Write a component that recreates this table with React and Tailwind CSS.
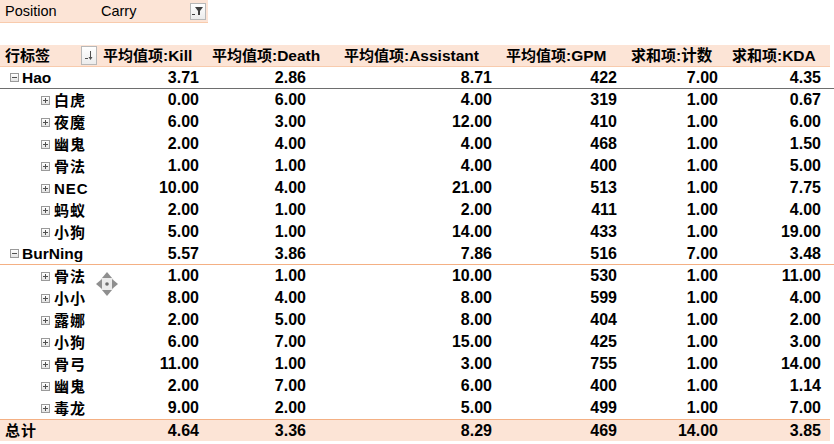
import React from "react";

const rows = [
  { label: "Hao", level: 0, v: ["3.71", "2.86", "8.71", "422", "7.00", "4.35"], line: "dark" },
  { label: "白虎", level: 1, v: ["0.00", "6.00", "4.00", "319", "1.00", "0.67"] },
  { label: "夜魔", level: 1, v: ["6.00", "3.00", "12.00", "410", "1.00", "6.00"] },
  { label: "幽鬼", level: 1, v: ["2.00", "4.00", "4.00", "468", "1.00", "1.50"] },
  { label: "骨法", level: 1, v: ["1.00", "1.00", "4.00", "400", "1.00", "5.00"] },
  { label: "NEC", level: 1, v: ["10.00", "4.00", "21.00", "513", "1.00", "7.75"] },
  { label: "蚂蚁", level: 1, v: ["2.00", "1.00", "2.00", "411", "1.00", "4.00"] },
  { label: "小狗", level: 1, v: ["5.00", "1.00", "14.00", "433", "1.00", "19.00"] },
  { label: "BurNing", level: 0, v: ["5.57", "3.86", "7.86", "516", "7.00", "3.48"], line: "tan" },
  { label: "骨法", level: 1, v: ["1.00", "1.00", "10.00", "530", "1.00", "11.00"] },
  { label: "小小", level: 1, v: ["8.00", "4.00", "8.00", "599", "1.00", "4.00"] },
  { label: "露娜", level: 1, v: ["2.00", "5.00", "8.00", "404", "1.00", "2.00"] },
  { label: "小狗", level: 1, v: ["6.00", "7.00", "15.00", "425", "1.00", "3.00"] },
  { label: "骨弓", level: 1, v: ["11.00", "1.00", "3.00", "755", "1.00", "14.00"] },
  { label: "幽鬼", level: 1, v: ["2.00", "7.00", "6.00", "400", "1.00", "1.14"] },
  { label: "毒龙", level: 1, v: ["9.00", "2.00", "5.00", "499", "1.00", "7.00"] },
];

const total = ["4.64", "3.36", "8.29", "469", "14.00", "3.85"];

// right padding per value column, matches where the numbers end
const valPad = ["pr-[10px]", "pr-[35px]", "pr-[11px]", "pr-[11px]", "pr-[11px]", "pr-[9px]"];

const headers = [
  ["平均值项", ":Kill"],
  ["平均值项", ":Death"],
  ["平均值项", ":Assistant"],
  ["平均值项", ":GPM"],
  ["求和项", ":计数"],
  ["求和项", ":KDA"],
];

const gridCols = "grid grid-cols-[100px_109px_132px_162px_125px_101px_101px_1fr]";

const ExpandBox = ({ open }) => (
  <span className="w-[9px] h-[9px] border border-[#9a9a9a] bg-gradient-to-b from-white to-[#e4e4e4] flex items-center justify-center shrink-0">
    <svg width="7" height="7" viewBox="0 0 7 7">
      <rect x="1" y="3" width="5" height="1" fill="#505050" />
      {!open && <rect x="3" y="1" width="1" height="5" fill="#505050" />}
    </svg>
  </span>
);

const MoveCursor = () => (
  <svg width="22" height="24" viewBox="0 0 22 24" className="absolute left-[96px] top-[272px]">
    <circle cx="11" cy="12" r="8" fill="#ebebeb" />
    <path d="M11 0 L16 6 L6 6 Z" fill="#8f8f8f" />
    <path d="M11 24 L16 18 L6 18 Z" fill="#8f8f8f" />
    <path d="M0 12 L6 7 L6 17 Z" fill="#8f8f8f" />
    <path d="M22 12 L16 7 L16 17 Z" fill="#8f8f8f" />
    <circle cx="11" cy="12" r="1.8" fill="#6c6c6c" />
  </svg>
);

export default function App() {
  return (
    <div className="relative w-[834px] h-[444px] bg-white overflow-hidden text-black font-['Liberation_Sans','Noto_Sans_CJK_SC',sans-serif] text-[15px] leading-none">
      {/* report filter */}
      <div className="flex w-[208px] h-[23px] bg-[#fce4d6] border-b border-[#f8cbad] items-center text-[14.5px]">
        <div className="w-[98px] pl-[5px]">Position</div>
        <div className="flex-1 pl-[3px]">Carry</div>
        <div className="mr-[2px] w-[16px] h-[17px] border border-[#b8b8b8] bg-gradient-to-b from-white to-[#ececec] flex items-center justify-center">
          <svg width="12" height="11" viewBox="0 0 12 11">
            <path d="M3 1 H11 L8 5 V9 H6 V5 Z" fill="#404040" />
            <rect x="0" y="8" width="3" height="1" fill="#404040" />
          </svg>
        </div>
      </div>

      <div className="h-[22px]" />

      {/* header */}
      <div className={`${gridCols} h-[22px] font-bold`}>
        <div className="bg-[#fce4d6] border-b border-[#f8cbad] flex items-center pl-[5px]">
          <span>行标签</span>
          <span className="ml-auto mr-[3px] w-[16px] h-[19px] border border-[#b8b8b8] bg-gradient-to-b from-white to-[#ececec] flex items-center justify-center">
            <svg width="10" height="11" viewBox="0 0 10 11">
              <rect x="1" y="8" width="3" height="1" fill="#505050" />
              <rect x="6" y="1" width="1" height="8" fill="#505050" />
              <path d="M4.5 7 L8.5 7 L6.5 10 Z" fill="#505050" />
            </svg>
          </span>
        </div>
        {headers.map(([cn, en], i) => (
          <div key={i} className="bg-[#fce4d6] border-b border-[#f8cbad] flex items-center pl-[3px] whitespace-nowrap">
            <span>{cn}</span>
            <span className="text-[15.5px]">{en}</span>
          </div>
        ))}
        <div />
      </div>

      {/* body rows */}
      {rows.map((r, idx) => (
        <div
          key={idx}
          className={`${gridCols} h-[22px] font-bold ${
            r.line === "dark" ? "border-b border-[#6e6e6e]" : r.line === "tan" ? "border-b border-[#f4b084]" : ""
          }`}
        >
          <div className={`flex items-center gap-[3px] ${r.level === 0 ? "pl-[10px] text-[15.5px]" : "pl-[41px]"}`}>
            <ExpandBox open={r.level === 0} />
            <span className={r.level === 0 ? "" : "ml-[1px] tracking-[1px]"}>{r.label}</span>
          </div>
          {r.v.map((val, i) => (
            <div key={i} className={`flex items-center justify-end text-[16px] ${valPad[i]}`}>
              {val}
            </div>
          ))}
          <div />
        </div>
      ))}

      {/* grand total */}
      <div className={`${gridCols} h-[22px] font-bold`}>
        <div className="bg-[#fce4d6] border-t border-[#f4b084] flex items-center pl-[5px] tracking-[1px]">总计</div>
        {total.map((val, i) => (
          <div key={i} className={`bg-[#fce4d6] border-t border-[#f4b084] flex items-center justify-end text-[16px] ${valPad[i]}`}>
            {val}
          </div>
        ))}
        <div />
      </div>

      <MoveCursor />
    </div>
  );
}
